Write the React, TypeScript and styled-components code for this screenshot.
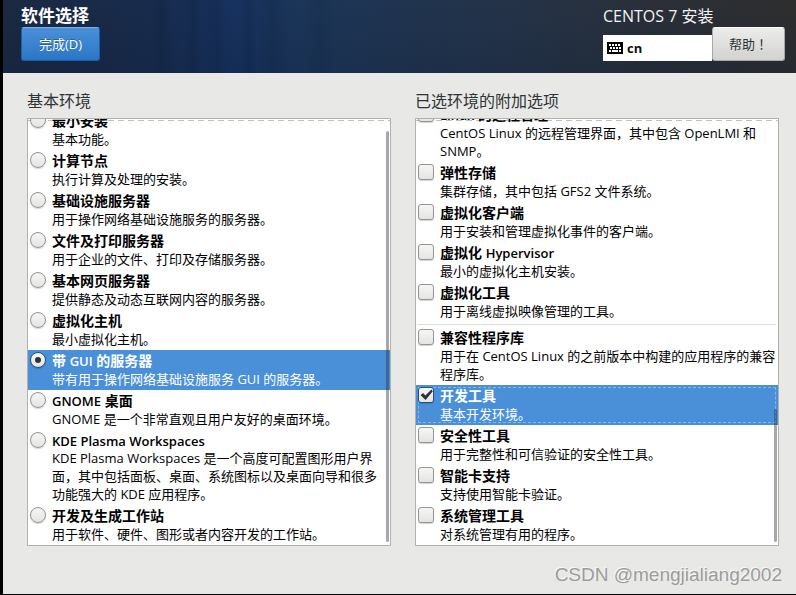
import React, { useState } from "react";
import styled, { createGlobalStyle, css } from "styled-components";

const GlobalStyle = createGlobalStyle`
  *, *::before, *::after { box-sizing: border-box; }
  body {
    margin: 0;
    background: #000;
    color: #000;
    font: 13px/18px "Open Sans", "Noto Sans CJK SC", sans-serif;
  }
  button, input { font: inherit; margin: 0; }
`;

const Screen = styled.div`
  position: relative;
  display: flex;
  flex-direction: column;
  min-height: calc(100vh - 1px);
  margin-left: 3px;
  background: #e8e8e6;
`;

const Header = styled.header`
  display: flex;
  justify-content: space-between;
  align-items: flex-start;
  height: 73px;
  padding: 7px 11px 0 18px;
  color: #fff;
  background:
    linear-gradient(90deg, transparent 19%, rgba(8, 25, 50, 0.2) 20%, transparent 21%, transparent 23%, rgba(8, 25, 50, 0.2) 24%, transparent 25%, rgba(8, 25, 50, 0.15) 27%, transparent 28%, transparent 30%, rgba(8, 25, 50, 0.2) 31%, transparent 32%, rgba(8, 25, 50, 0.15) 34%, transparent 36%, transparent 38%, rgba(8, 25, 50, 0.1) 40%, transparent 42%),
    linear-gradient(180deg, rgba(10, 35, 75, 0) 0%, rgba(8, 25, 50, 0.2) 100%),
    linear-gradient(90deg, #1b2942 0%, #182b4b 18%, #17325f 29%, #1c3659 38%, #21344f 52%, #253347 66%, #2a2f38 82%, #2e2e2e 100%);
`;

const TitleGroup = styled.div`
  display: flex;
  flex-direction: column;
  align-items: flex-start;
  gap: 2px;
`;

const PageTitle = styled.h1`
  margin: 0;
  font-size: 17px;
  line-height: 18px;
  font-weight: 700;
`;

const Button = styled.button<{ $primary?: boolean }>`
  height: 34px;
  padding: 0 16px;
  border: 1px solid #a8a8a4;
  border-top-color: #fff;
  border-radius: 3px;
  background: linear-gradient(#ececea, #d2d2d0);
  color: #2e3436;
  font-family: "Open Sans", "Noto Sans CJK TC", sans-serif;
  line-height: 18px;
  ${(p) =>
    p.$primary &&
    css`
      padding: 0 17px;
      border-color: #1f5fa8;
      border-top-color: #79afe8;
      background: linear-gradient(#4a90d9, #2a76c6);
      color: #fff;
      text-shadow: 0 -1px rgba(0, 0, 0, 0.3);
    `}
`;

const ProductGroup = styled.div`
  display: flex;
  flex-direction: column;
  gap: 2px;
`;

const Product = styled.div`
  font-size: 16px;
  line-height: 18px;
  color: #f2f2f2;
`;

const ToolRow = styled.div`
  display: flex;
  align-items: flex-end;
`;

const Layout = styled.div`
  display: flex;
  align-items: center;
  gap: 4px;
  width: 109px;
  height: 26px;
  padding-left: 4px;
  background: #fff;
  color: #111;
  font-weight: 700;
`;

const Main = styled.main`
  flex: 1;
  display: grid;
  grid-template-columns: minmax(0, 1fr) minmax(0, 1fr);
  gap: 24px;
  padding: 19px 17px 48px 24px;
`;

const Column = styled.section`
  display: flex;
  flex-direction: column;
  gap: 8px;
`;

const Heading = styled.h2`
  margin: 0;
  font-size: 16px;
  line-height: 18px;
  font-weight: 400;
  color: #2e3436;
`;

const Viewport = styled.div`
  position: relative;
  flex: 1 0 428px;
  height: 428px;
  display: flex;
  flex-direction: column;
  justify-content: flex-end;
  overflow: hidden;
  border: 1px solid #b0b2ac;
  background: #fff;
  &::before {
    content: "";
    position: absolute;
    inset: 1px 0 auto;
    height: 1px;
    background: repeating-linear-gradient(90deg, #c0c0c0 0 6px, transparent 6px 10px);
  }
`;

const Thumb = styled.span<{ $top: string }>`
  position: absolute;
  top: ${(p) => p.$top};
  right: 1px;
  bottom: 3px;
  width: 3px;
  border-radius: 2px;
  background: rgba(40, 50, 55, 0.42);
`;

const Row = styled.label<{ $selected: boolean; $focus?: boolean }>`
  position: relative;
  flex: none;
  display: grid;
  grid-template-columns: 16px minmax(0, 1fr);
  column-gap: 6px;
  padding: 2px;
  ${(p) =>
    p.$selected &&
    css`
      background: #4a90d9;
      color: #fff;
    `}
  ${(p) =>
    p.$focus &&
    css`
      &::after {
        content: "";
        position: absolute;
        inset: 2px;
        border: 1px dashed #86b5e6;
        pointer-events: none;
      }
    `}
`;

const Choice = styled.input`
  appearance: none;
  width: 16px;
  height: 16px;
  border: 1px solid #94958f;
  background: linear-gradient(#f6f6f5, #e4e4e2);
  box-shadow: 0 1px 1px rgba(0, 0, 0, 0.18);
  outline: none;
  display: grid;
  place-items: center;
  &[type="radio"] { border-radius: 50%; }
  &[type="checkbox"] { border-radius: 3px; }
  &:checked { border-color: #28527d; }
  &[type="radio"]:checked::after {
    content: "";
    width: 6px;
    height: 6px;
    border-radius: 50%;
    background: #2e3436;
  }
`;

const ChoiceCell = styled.span`
  position: relative;
  z-index: 1;
  height: 16px;
  display: flex;
`;

const Tick = styled.svg`
  position: absolute;
  inset: 0;
  pointer-events: none;
`;

const Copy = styled.span`
  display: block;
`;

const Name = styled.span<{ $latin: boolean }>`
  display: block;
  height: ${(p) => (p.$latin ? 17 : 18)}px;
  font-size: 14px;
  line-height: ${(p) => (p.$latin ? 17 : 18)}px;
  font-weight: 700;
`;

const Latin = styled.span`
  font-size: 13px;
  font-weight: 600;
`;

const Description = styled.span`
  display: block;
`;

const Separator = styled.hr`
  flex: none;
  width: calc(100% - 4px);
  height: 1px;
  margin: 2px;
  border: 0;
  background: #dcdcda;
`;

const Watermark = styled.div`
  position: absolute;
  right: 14px;
  bottom: 8px;
  font: 19px/22px "Liberation Sans", sans-serif;
  color: #9c9c9b;
  text-shadow: -1px -1px #f8f8f8;
`;

interface Item {
  name: string;
  text: string;
}

const environments: Item[] = [
  { name: "最小安装", text: "基本功能。" },
  { name: "计算节点", text: "执行计算及处理的安装。" },
  { name: "基础设施服务器", text: "用于操作网络基础设施服务的服务器。" },
  { name: "文件及打印服务器", text: "用于企业的文件、打印及存储服务器。" },
  { name: "基本网页服务器", text: "提供静态及动态互联网内容的服务器。" },
  { name: "虚拟化主机", text: "最小虚拟化主机。" },
  { name: "带 GUI 的服务器", text: "带有用于操作网络基础设施服务 GUI 的服务器。" },
  { name: "GNOME 桌面", text: "GNOME 是一个非常直观且用户友好的桌面环境。" },
  {
    name: "KDE Plasma Workspaces",
    text: "KDE Plasma Workspaces 是一个高度可配置图形用户界面，其中包括面板、桌面、系统图标以及桌面向导和很多功能强大的 KDE 应用程序。",
  },
  { name: "开发及生成工作站", text: "用于软件、硬件、图形或者内容开发的工作站。" },
];

const environmentAddons: Item[] = [
  { name: "Linux 的远程管理", text: "CentOS Linux 的远程管理界面，其中包含 OpenLMI 和 SNMP。" },
  { name: "弹性存储", text: "集群存储，其中包括 GFS2 文件系统。" },
  { name: "虚拟化客户端", text: "用于安装和管理虚拟化事件的客户端。" },
  { name: "虚拟化 Hypervisor", text: "最小的虚拟化主机安装。" },
  { name: "虚拟化工具", text: "用于离线虚拟映像管理的工具。" },
];

const commonAddons: Item[] = [
  { name: "兼容性程序库", text: "用于在 CentOS Linux 的之前版本中构建的应用程序的兼容程序库。" },
  { name: "开发工具", text: "基本开发环境。" },
  { name: "安全性工具", text: "用于完整性和可信验证的安全性工具。" },
  { name: "智能卡支持", text: "支持使用智能卡验证。" },
  { name: "系统管理工具", text: "对系统管理有用的程序。" },
];

function KeyboardIcon() {
  const keys = [
    [2, 2], [5, 2], [8, 2], [11, 2],
    [3, 5], [6, 5], [9, 5], [12, 5],
    [2, 8], [12, 8],
  ];
  return (
    <svg width="16" height="12" viewBox="0 0 16 12" shapeRendering="crispEdges" aria-hidden="true">
      <rect width="16" height="12" rx="1" fill="#000" />
      {keys.map(([x, y]) => (
        <rect key={`${x}-${y}`} x={x} y={y} width="2" height="2" fill="#fff" />
      ))}
      <rect x="5" y="8" width="6" height="2" fill="#fff" />
    </svg>
  );
}

interface OptionProps {
  item: Item;
  type: "radio" | "checkbox";
  checked: boolean;
  focus?: boolean;
  onSelect: () => void;
}

function Option({ item, type, checked, focus, onSelect }: OptionProps) {
  const latinOnly = /^[\x00-\x7f]+$/.test(item.name);
  return (
    <Row $selected={checked} $focus={focus}>
      <ChoiceCell>
        <Choice type={type} name={type === "radio" ? "environment" : item.name} checked={checked} onChange={onSelect} />
        {type === "checkbox" && checked && (
          <Tick width="16" height="16" viewBox="0 0 16 16" aria-hidden="true">
            <path d="M2.6 8.2 5 6 7.4 8.4 13.4 2.4 14.8 4.2 7.6 13Z" fill="#2e3436" />
          </Tick>
        )}
      </ChoiceCell>
      <Copy>
        <Name $latin={latinOnly}>
          {item.name.split(/([A-Za-z][A-Za-z ]*[A-Za-z])/).map((part, i) => (i % 2 ? <Latin key={i}>{part}</Latin> : part))}
        </Name>
        <Description>{item.text}</Description>
      </Copy>
    </Row>
  );
}

export default function App() {
  const [environment, setEnvironment] = useState("带 GUI 的服务器");
  const [addons, setAddons] = useState<string[]>(["开发工具"]);
  const toggle = (name: string) =>
    setAddons((list) => (list.includes(name) ? list.filter((n) => n !== name) : [...list, name]));

  const addonRow = (item: Item) => (
    <Option
      key={item.name}
      item={item}
      type="checkbox"
      checked={addons.includes(item.name)}
      focus={item.name === "开发工具"}
      onSelect={() => toggle(item.name)}
    />
  );

  return (
    <>
      <GlobalStyle />
      <Screen>
        <Header>
          <TitleGroup>
            <PageTitle>软件选择</PageTitle>
            <Button $primary>完成(D)</Button>
          </TitleGroup>
          <ProductGroup>
            <Product>CENTOS 7 安装</Product>
            <ToolRow>
              <Layout>
                <KeyboardIcon />
                cn
              </Layout>
              <Button>帮助！</Button>
            </ToolRow>
          </ProductGroup>
        </Header>
        <Main>
          <Column>
            <Heading>基本环境</Heading>
            <Viewport>
              {environments.map((item) => (
                <Option
                  key={item.name}
                  item={item}
                  type="radio"
                  checked={environment === item.name}
                  onSelect={() => setEnvironment(item.name)}
                />
              ))}
              <Thumb $top="12px" />
            </Viewport>
          </Column>
          <Column>
            <Heading>已选环境的附加选项</Heading>
            <Viewport>
              {environmentAddons.map(addonRow)}
              <Separator />
              {commonAddons.map(addonRow)}
              <Thumb $top="68%" />
            </Viewport>
          </Column>
        </Main>
        <Watermark>CSDN @mengjialiang2002</Watermark>
      </Screen>
    </>
  );
}
